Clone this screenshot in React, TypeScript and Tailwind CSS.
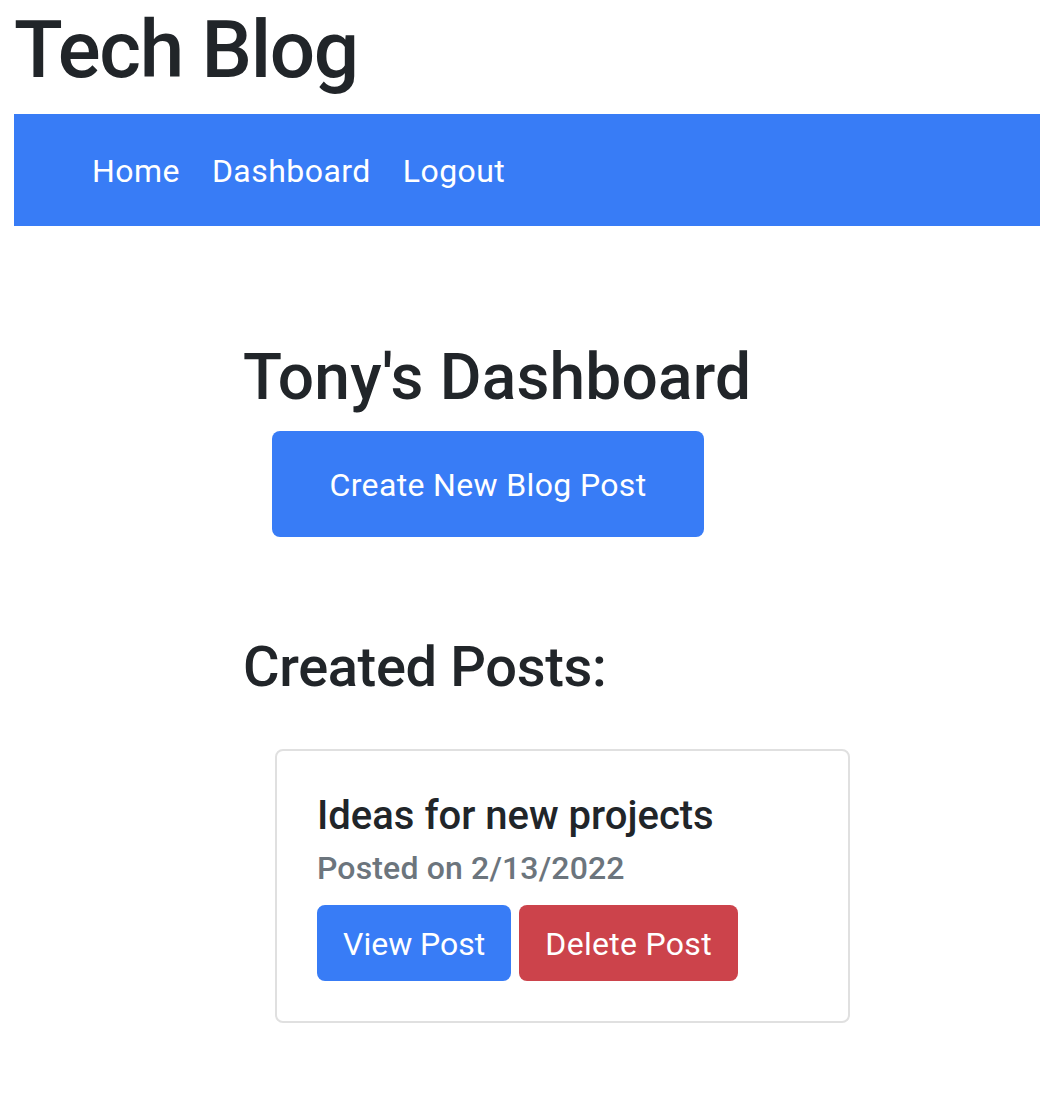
import React from "react";

const links = ["Home", "Dashboard", "Logout"];

const App = () => {
  return (
    <div className="min-h-[1102px] bg-white pl-[14px] font-['Roboto',sans-serif] text-[#212529]">
      <header>
        <h1 className="pt-[2px] text-[80px] font-medium leading-[96px] tracking-[-1.3px]">Tech Blog</h1>
        <nav className="mt-[16px] flex h-[112px] items-center bg-[#387cf6] pl-[62px] pt-[2px]">
          {links.map((link) => (
            <a key={link} href="#" className="px-[16px] text-[32px] leading-[48px] tracking-[0.45px] text-white">
              {link}
            </a>
          ))}
        </nav>
      </header>

      <main className="pl-[229px]">
        {/* dashboard heading */}
        <h2 className="mt-[114px] text-[64px] font-medium leading-[76px] tracking-[0.2px]">Tony's Dashboard</h2>
        <button className="ml-[29px] mt-[15px] flex h-[106px] w-[432px] items-center justify-center rounded-[8px] bg-[#387cf6] pt-[2px] text-[32px] tracking-[0.35px] text-white">
          Create New Blog Post
        </button>

        <h3 className="mt-[96px] text-[56px] font-medium leading-[68px] tracking-[-0.35px]">Created Posts:</h3>

        {/* post card */}
        <div className="ml-[32px] mt-[48px] w-[575px] rounded-[8px] border-2 border-[#e0e0e0] px-[40px] pb-[40px] pt-[41px]">
          <h5 className="text-[40px] font-medium leading-[48px]">Ideas for new projects</h5>
          <h6 className="mt-[9px] text-[32px] font-medium leading-[38px] tracking-[0.15px] text-[#6c757d]">Posted on 2/13/2022</h6>
          <div className="mt-[18px] flex gap-[8px]">
            <button className="h-[76px] rounded-[8px] bg-[#387cf6] px-[26px] pt-[2px] text-[32px] text-white">View Post</button>
            <button className="h-[76px] rounded-[8px] bg-[#cc434b] px-[26px] pt-[2px] text-[32px] tracking-[0.3px] text-white">Delete Post</button>
          </div>
        </div>
      </main>
    </div>
  );
};

export default App;
